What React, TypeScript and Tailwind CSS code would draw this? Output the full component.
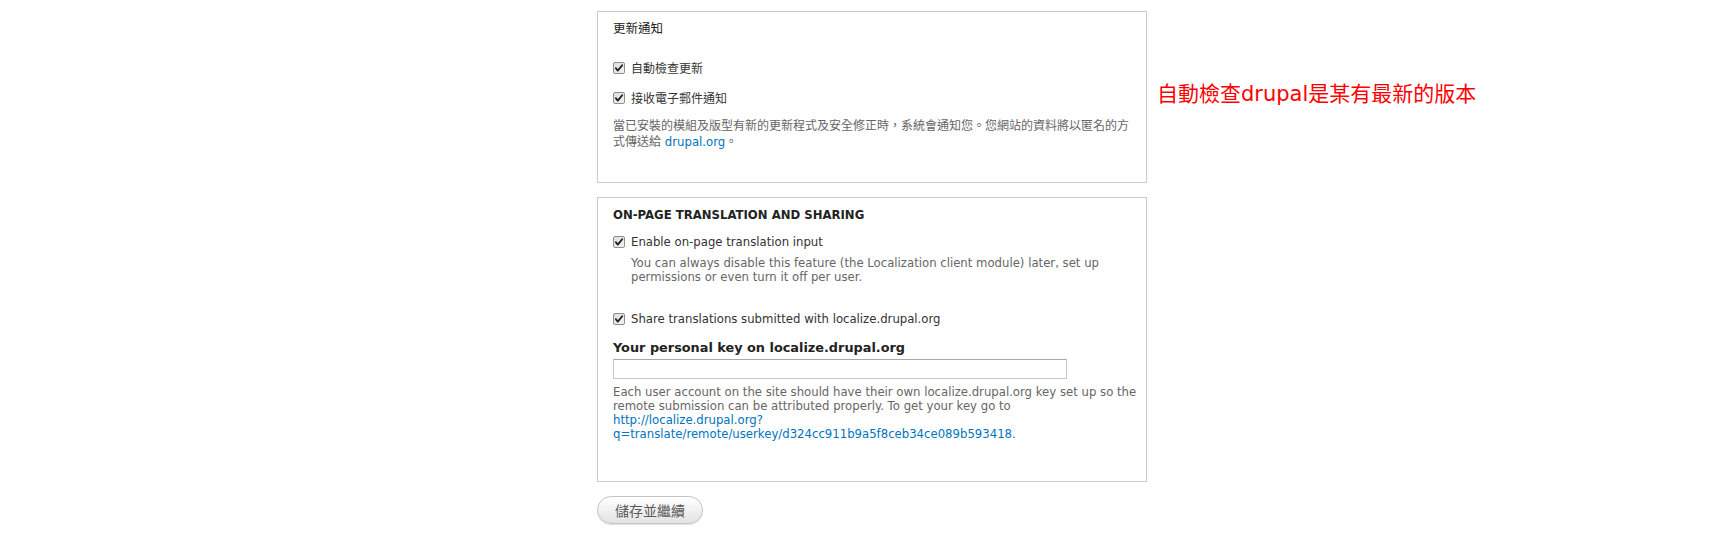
import React from 'react';

const FONT = '"DejaVu Sans", "Noto Sans CJK TC", sans-serif';
const CJK = '"Noto Sans CJK TC", "DejaVu Sans", sans-serif';

const Check: React.FC = () => (
  <svg width="12" height="12" viewBox="0 0 12 12" className="shrink-0">
    <defs>
      <linearGradient id="cbg" x1="0" y1="0" x2="1" y2="1">
        <stop offset="0" stopColor="#dcdcdc" />
        <stop offset="1" stopColor="#f4f4f4" />
      </linearGradient>
    </defs>
    <rect x="0.5" y="0.5" width="11" height="11" rx="1.5" fill="url(#cbg)" stroke="#8e8f8f" />
    <path d="M2.8 6.2 L4.8 8.6 L9.2 3.2" fill="none" stroke="#222" strokeWidth="1.8" strokeLinecap="round" strokeLinejoin="round" />
  </svg>
);

const CheckRow: React.FC<{ label: string; cjk?: boolean }> = ({ label, cjk }) => (
  <div className="flex items-center h-[16px] gap-[6px]">
    <Check />
    <span
      className={cjk ? 'text-[12px] leading-[16px] text-[#333]' : 'text-[11.7px] leading-[16px] text-[#333]'}
      style={{ fontFamily: cjk ? CJK : FONT }}
    >
      {label}
    </span>
  </div>
);

export default function App() {
  return (
    <div className="w-[1730px] h-[534px] bg-white flex pt-[11px] pl-[597px]" style={{ fontFamily: FONT }}>
      <div className="w-[550px] flex flex-col">
        {/* 更新通知 */}
        <div className="h-[172px] border border-[#cccccc] px-[15px] pt-[8px]">
          <div className="text-[12.5px] leading-[16px] text-[#222]" style={{ fontFamily: CJK }}>
            更新通知
          </div>
          <div className="mt-[24px]">
            <CheckRow label="自動檢查更新" cjk />
          </div>
          <div className="mt-[14px]">
            <CheckRow label="接收電子郵件通知" cjk />
          </div>
          <p className="mt-[12px] text-[12px] leading-[16px] text-[#666]" style={{ fontFamily: FONT }}>
            當已安裝的模組及版型有新的更新程式及安全修正時，系統會通知您。您網站的資料將以匿名的方
            <br />
            式傳送給 <span className="text-[#0074bd] text-[11.7px]">drupal.org</span>。
          </p>
        </div>

        {/* On-page translation */}
        <div className="mt-[14px] h-[285px] border border-[#cccccc] px-[15px] pt-[9px]">
          <div className="text-[11.7px] leading-[16px] font-bold text-[#222]">ON-PAGE TRANSLATION AND SHARING</div>
          <div className="mt-[11px]">
            <CheckRow label="Enable on-page translation input" />
          </div>
          <p className="mt-[6px] ml-[18px] text-[11.7px] leading-[14px] text-[#666]">
            You can always disable this feature (the Localization client module) later, set up
            <br />
            permissions or even turn it off per user.
          </p>
          <div className="mt-[27px]">
            <CheckRow label="Share translations submitted with localize.drupal.org" />
          </div>
          <label className="block mt-[12px] text-[12.85px] leading-[18px] font-bold text-[#222]">
            Your personal key on localize.drupal.org
          </label>
          <input
            type="text"
            className="block mt-[2px] w-[454px] h-[20px] border border-[#c8c8c8] border-t-[#a8a8a8] bg-white outline-none"
          />
          <p className="mt-[6px] text-[11.7px] leading-[14px] text-[#666] whitespace-nowrap">
            Each user account on the site should have their own localize.drupal.org key set up so the
            <br />
            remote submission can be attributed properly. To get your key go to
            <br />
            <span className="text-[#0074bd]">
              http://localize.drupal.org?
              <br />
              q=translate/remote/userkey/d324cc911b9a5f8ceb34ce089b593418.
            </span>
          </p>
        </div>

        <div className="mt-[14px]">
          <button
            className="w-[106px] h-[28px] rounded-[14px] border border-[#c4c4c4] bg-gradient-to-b from-[#ffffff] to-[#e3e3e3] shadow-[0_1px_1px_rgba(0,0,0,0.12)] text-[14px] leading-[26px] text-[#5a5a5a]"
            style={{ fontFamily: CJK }}
          >
            儲存並繼續
          </button>
        </div>
      </div>

      <div className="ml-[10px] mt-[71px] text-[21px] leading-[24px] text-[#ff0000] whitespace-nowrap" style={{ fontFamily: FONT }}>
        自動檢查drupal是某有最新的版本
      </div>
    </div>
  );
}
